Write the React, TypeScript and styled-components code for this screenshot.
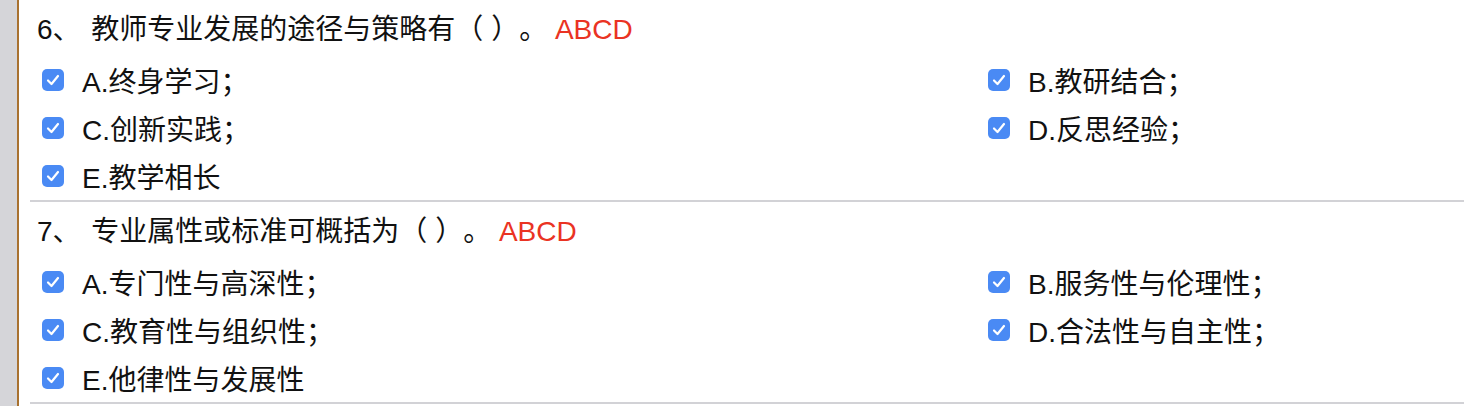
import React from 'react';
import styled, { createGlobalStyle } from 'styled-components';

// --- Settings ---------------------------------------------------------------
const FONT = '"Liberation Sans", "Noto Sans CJK SC", sans-serif';
const CHECK_BLUE = '#4a8af4';

const GlobalStyle = createGlobalStyle`
  html, body {
    margin: 0;
    padding: 0;
    background: #ffffff;
  }
  body {
    font-family: ${FONT};
    color: #111111;
    text-spacing-trim: space-all;
  }
`;

type Question = {
  num: number;
  title: string;
  answer: string;
  options: string[];
};

const QUESTIONS: Question[] = [
  {
    num: 6,
    title: '教师专业发展的途径与策略有（ ）。',
    answer: 'ABCD',
    options: ['A.终身学习；', 'B.教研结合；', 'C.创新实践；', 'D.反思经验；', 'E.教学相长'],
  },
  {
    num: 7,
    title: '专业属性或标准可概括为（ ）。',
    answer: 'ABCD',
    options: [
      'A.专门性与高深性；',
      'B.服务性与伦理性；',
      'C.教育性与组织性；',
      'D.合法性与自主性；',
      'E.他律性与发展性',
    ],
  },
];

// --- Layout -----------------------------------------------------------------
const Page = styled.div`
  display: flex;
  min-height: 406px;
`;

const SideStrip = styled.div`
  flex: 0 0 17px;
  background: #d5d5d9;
  border-right: 2px solid #a8712f;
`;

const Content = styled.main`
  flex: 1;
  padding-left: 11px;
`;

// --- Question ---------------------------------------------------------------
const Block = styled.section`
  padding: 6px 0 0;
  border-bottom: 2px solid #d2d2d6;
`;

const Title = styled.div`
  height: 48px;
  line-height: 48px;
  padding-left: 7px;
  font-size: 28px;
  white-space: pre;
`;

const Num = styled.span`
  margin-right: 3px;
`;

const Answer = styled.span`
  color: #ea3323;
`;

const Options = styled.div`
  display: grid;
  grid-template-columns: 946px 1fr;
  grid-auto-rows: 48px;
  margin-top: 2px;
  padding-left: 12px;
`;

const Option = styled.label`
  display: flex;
  align-items: center;
  gap: 18px;
  font-size: 28px;
`;

const Box = styled.span`
  flex: 0 0 22px;
  width: 22px;
  height: 22px;
  border-radius: 5px;
  background: ${CHECK_BLUE};
  display: flex;
  align-items: center;
  justify-content: center;
`;

function Checked() {
  return (
    <Box>
      <svg width="14" height="12" viewBox="0 0 14 12">
        <path
          d="M2 6.5 L5.5 10 L12 2"
          fill="none"
          stroke="#ffffff"
          strokeWidth="2.2"
          strokeLinecap="round"
          strokeLinejoin="round"
        />
      </svg>
    </Box>
  );
}

function QuestionBlock({ q }: { q: Question }) {
  return (
    <Block>
      <Title>
        <Num>{q.num}、 </Num>
        {q.title} <Answer>{q.answer}</Answer>
      </Title>
      <Options>
        {q.options.map((opt) => (
          <Option key={opt}>
            <Checked />
            {opt}
          </Option>
        ))}
      </Options>
    </Block>
  );
}

export default function App() {
  return (
    <>
      <GlobalStyle />
      <Page>
        <SideStrip />
        <Content>
          {QUESTIONS.map((q) => (
            <QuestionBlock key={q.num} q={q} />
          ))}
        </Content>
      </Page>
    </>
  );
}
